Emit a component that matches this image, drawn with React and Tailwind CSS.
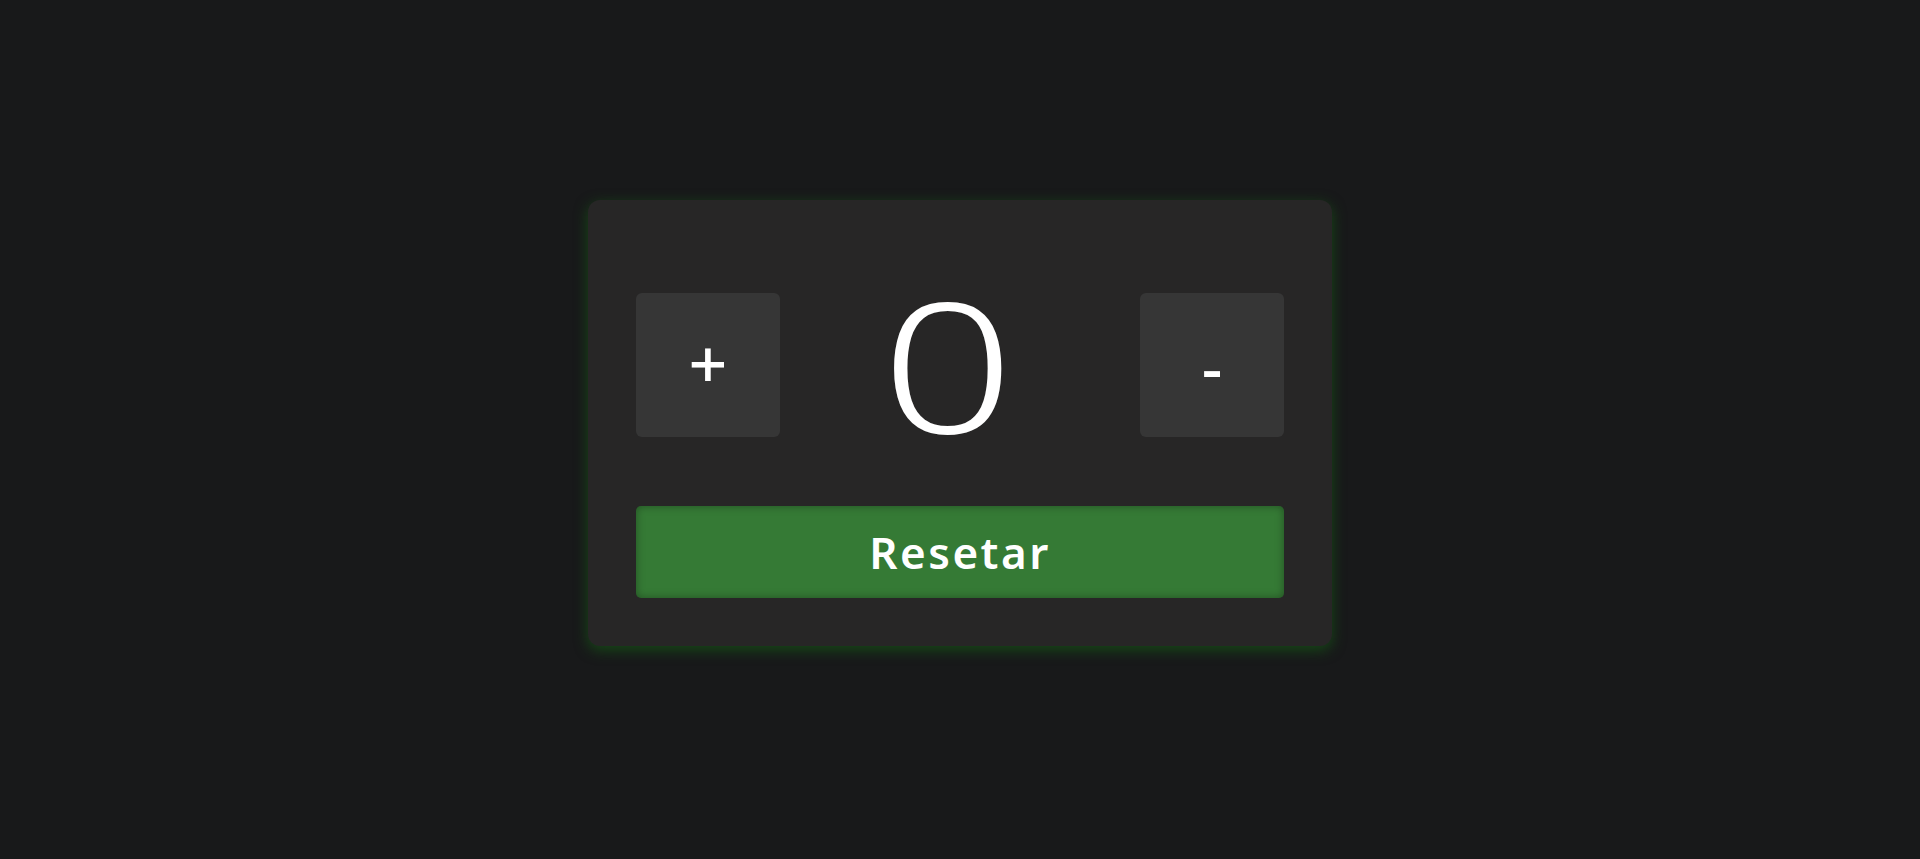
export default function App() {
  return (
    <div className="w-full h-[859px] bg-[#18191a] flex items-start justify-center pt-[200px]" style={{ fontFamily: '"Noto Sans", "Open Sans", sans-serif' }}>
      <div className="w-[744px] h-[446px] bg-[#272626] rounded-[12px] px-12 pt-[93px] pb-12 flex flex-col shadow-[0_4px_14px_rgba(22,80,22,0.85)]">
        <div className="flex items-center justify-between h-[144px]">
          <button className="w-[144px] h-[144px] bg-[#363636] rounded-[6px] flex items-center justify-center text-white text-[68px] font-medium leading-none pb-[6px]">+</button>
          <div className="text-white text-[181px] font-light leading-none mr-[24px] mt-[-4px] scale-x-[1.29]">0</div>
          <button className="w-[144px] h-[144px] bg-[#363636] rounded-[6px] flex items-center justify-center text-white text-[64px] font-medium leading-none pt-[4px]">-</button>
        </div>
        <button className="mt-[69px] h-[92px] w-full bg-[#357a35] rounded-[5px] text-white text-[44px] font-semibold tracking-[2.5px] flex items-center justify-center shadow-[inset_0_0_8px_rgba(0,0,0,0.35)]">Resetar</button>
      </div>
    </div>
  );
}
